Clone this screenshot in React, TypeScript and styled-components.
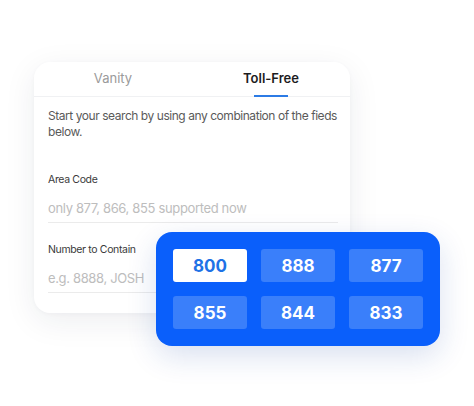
import React from "react";
import styled, { createGlobalStyle } from "styled-components";

const GlobalStyle = createGlobalStyle`
  html, body {
    margin: 0;
    background: #ffffff;
    font-family: Inter, "Noto Sans", sans-serif;
  }
`;

const codes = ["800", "888", "877", "855", "844", "833"];

function App() {
  return (
    <Page>
      <GlobalStyle />
      <Scene>
        <Card>
          <Tabs>
            <Tab>Vanity</Tab>
            <Tab active>Toll-Free</Tab>
          </Tabs>
          <Body>
            <Intro>Start your search by using any combination of the fieds below.</Intro>
            <Field>
              <Label>Area Code</Label>
              <Placeholder>only 877, 866, 855 supported now</Placeholder>
            </Field>
            <Field>
              <Label>Number to Contain</Label>
              <Placeholder>e.g. 8888, JOSH</Placeholder>
            </Field>
          </Body>
        </Card>
        <CodePanel>
          {codes.map((c, i) => (
            <CodeButton key={c} selected={i === 0}>
              {c}
            </CodeButton>
          ))}
        </CodePanel>
      </Scene>
    </Page>
  );
}

const Page = styled.div`
  width: 474px;
  height: 406px;
  padding: 62px 0 0 34px;
  box-sizing: border-box;
  overflow: hidden;
`;

const Scene = styled.div`
  position: relative;
  width: 316px;
`;

const Card = styled.div`
  width: 316px;
  height: 251px;
  background: #fff;
  border-radius: 16px;
  box-shadow: 0 8px 32px rgba(30, 40, 70, 0.08), 0 1px 4px rgba(30, 40, 70, 0.03);
  overflow: hidden;
`;

const Tabs = styled.div`
  display: flex;
  height: 35px;
  box-sizing: border-box;
  padding-bottom: 3px;
  border-bottom: 1px solid #f0f1f3;
`;

const Tab = styled.div<{ active?: boolean }>`
  flex: 1;
  display: flex;
  align-items: center;
  justify-content: center;
  position: relative;
  font-size: 13px;
  font-weight: ${(p) => (p.active ? 600 : 400)};
  color: ${(p) => (p.active ? "#1c1c1e" : "#9a9a9a")};

  &::after {
    content: "";
    display: ${(p) => (p.active ? "block" : "none")};
    position: absolute;
    bottom: -4px;
    left: 50%;
    transform: translateX(-50%);
    width: 34px;
    height: 2px;
    background: #2c7be5;
  }
`;

const Body = styled.div`
  padding: 11px 12px 0 14px;
`;

const Intro = styled.p`
  margin: 0 0 34px;
  font-size: 12px;
  letter-spacing: -0.45px;
  line-height: 15.5px;
  color: #5a5a5a;
`;

const Field = styled.div`
  border-bottom: 1.5px solid #ebebeb;
  margin-bottom: 20px;
`;

const Label = styled.div`
  font-size: 10.5px;
  color: #3a3a3a;
  letter-spacing: -0.35px;
  line-height: 14px;
`;

const Placeholder = styled.div`
  font-size: 13px;
  letter-spacing: -0.35px;
  color: #bdbdbd;
  line-height: 18px;
  padding: 12px 0 5px;
`;

const CodePanel = styled.div`
  position: absolute;
  left: 122px;
  top: 170px;
  width: 284px;
  height: 114px;
  box-sizing: border-box;
  padding: 17px;
  border-radius: 16px;
  background: #0a5ffb;
  box-shadow: 0 10px 30px rgba(20, 60, 160, 0.16);
  display: grid;
  grid-template-columns: repeat(3, 74px);
  grid-auto-rows: 33px;
  column-gap: 14px;
  row-gap: 14px;
`;

const CodeButton = styled.div<{ selected?: boolean }>`
  display: flex;
  align-items: center;
  justify-content: center;
  border-radius: 3px;
  font-size: 17px;
  font-weight: 700;
  background: ${(p) => (p.selected ? "#ffffff" : "#3a7ffa")};
  color: ${(p) => (p.selected ? "#1f72e6" : "#ffffff")};
`;

export default App;
